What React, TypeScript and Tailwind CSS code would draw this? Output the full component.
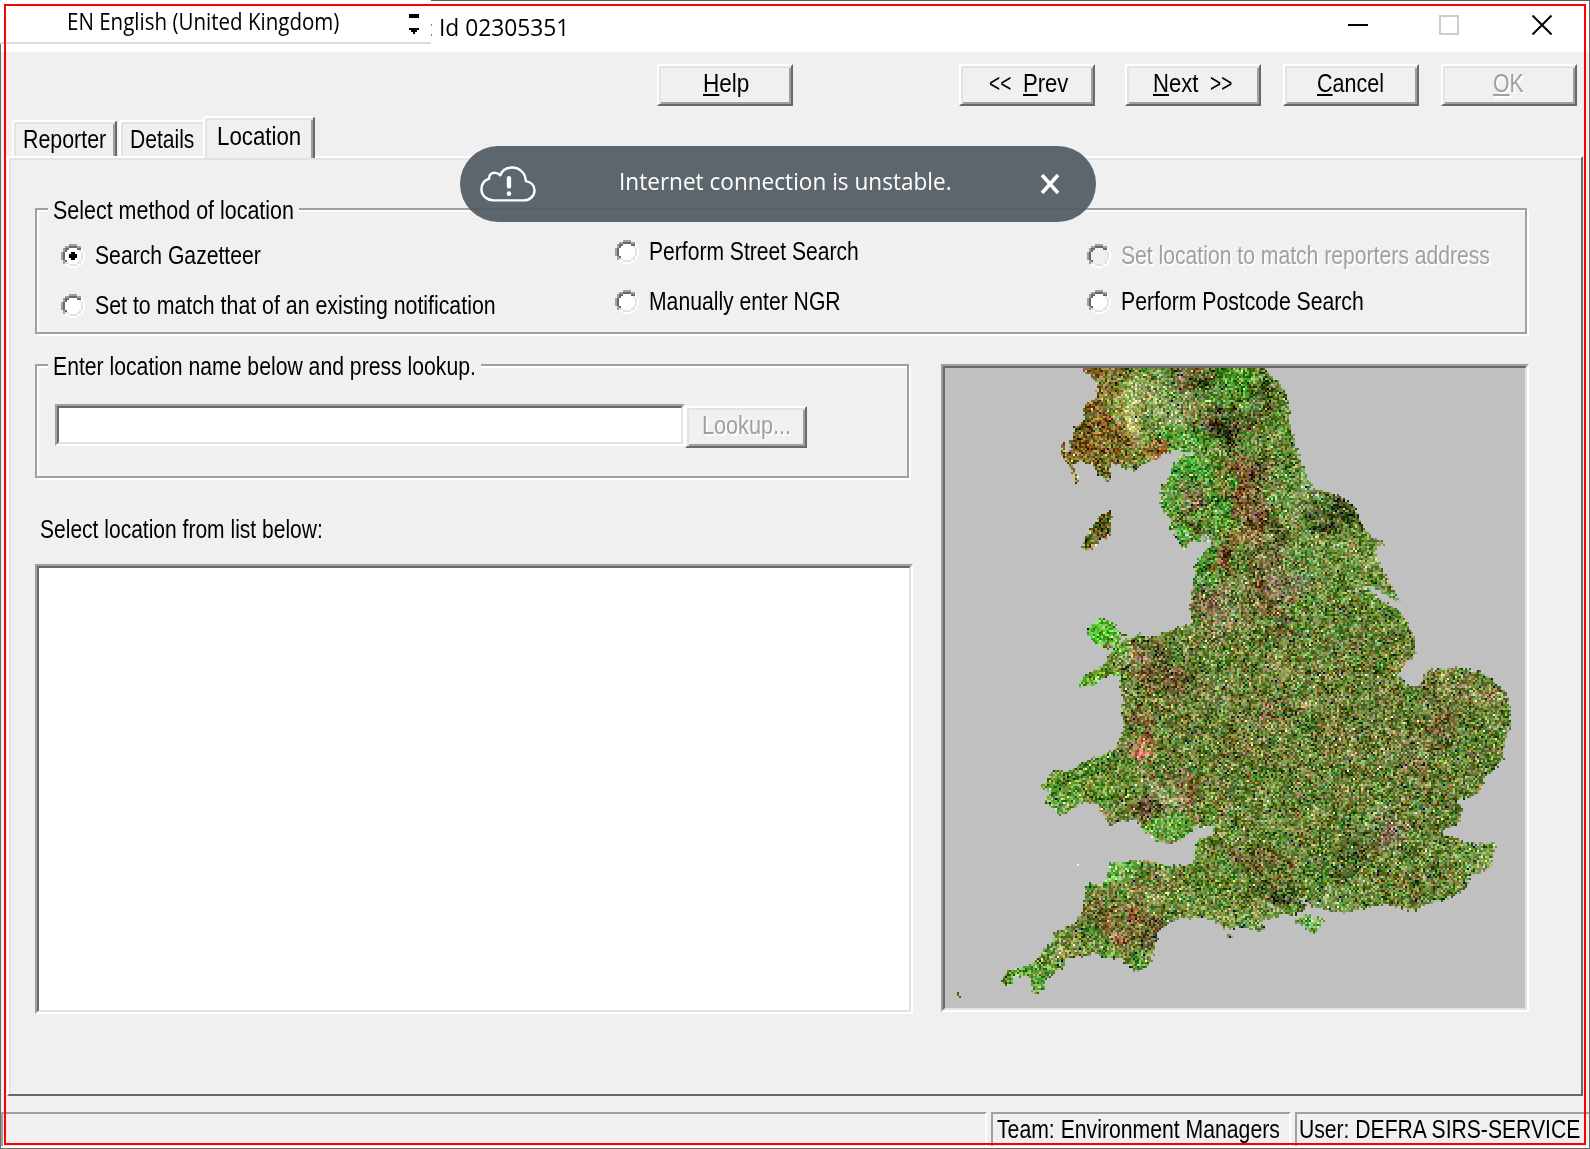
import React, { useLayoutEffect, useRef } from "react";

/* Single line of text condensed or expanded horizontally to a given width. */
function Fit({ w, className = "", children }: { w: number; className?: string; children: React.ReactNode }) {
  const ref = useRef<HTMLSpanElement>(null);
  useLayoutEffect(() => {
    const el = ref.current;
    if (el) el.style.transform = `scaleX(${(w - 2) / el.offsetWidth})`;
  }, [w]);
  return (
    <span className={`block h-[30px] shrink-0 pl-px text-[26px] leading-[30px] whitespace-pre ${className}`} style={{ width: w }}>
      <span ref={ref} className="inline-block origin-left">
        {children}
      </span>
    </span>
  );
}

const disabledText = "text-[#a0a0a0] [text-shadow:2px_2px_0_#ffffff]";

function Key({ children }: { children: React.ReactNode }) {
  return (
    <span className="underline decoration-2 underline-offset-[2px] [text-decoration-skip-ink:none]">{children}</span>
  );
}

function PushButton({ className = "", children }: { className?: string; children: React.ReactNode }) {
  return (
    <button
      className={`flex h-[42px] shrink-0 border-2 border-t-white border-l-white border-r-[#696969] border-b-[#696969] pt-0.5 shadow-[inset_2px_2px_0_#e3e3e3,inset_-2px_-2px_0_#a0a0a0] ${className}`}
    >
      {children}
    </button>
  );
}

function RadioMark({ checked, disabled }: { checked?: boolean; disabled?: boolean }) {
  return (
    <svg width="24" height="24" viewBox="0 0 12 12" shapeRendering="crispEdges" className="shrink-0">
      <path fill={disabled ? "#f0f0f0" : "#ffffff"} d="M4 2h4v1h1v1h1v4h-1v1h-1v1h-4v-1h-1v-1h-1v-4h1v-1h1z" />
      <path fill="#a0a0a0" d="M4 0h4v1h-4zM2 1h2v1h-2zM8 1h2v1h-2zM1 2h1v2h-1zM0 4h1v4h-1zM1 8h1v2h-1z" />
      <path fill="#696969" d="M4 1h4v1h-4zM2 2h2v1h-2zM8 2h2v1h-2zM2 3h1v1h-1zM1 4h1v4h-1zM2 8h1v1h-1z" />
      <path fill="#e3e3e3" d="M9 3h1v1h-1zM10 4h1v4h-1zM9 8h1v1h-1zM8 9h2v1h-2zM2 9h2v1h-2zM4 10h4v1h-4z" />
      <path fill="#ffffff" d="M10 2h1v2h-1zM11 4h1v4h-1zM10 8h1v2h-1zM8 10h2v1h-2zM2 10h2v1h-2zM4 11h4v1h-4z" />
      {checked && <path fill="#000" d="M5 4h2v1h1v2h-1v1h-2v-1h-1v-2h1z" />}
    </svg>
  );
}

function Radio(props: { label: string; w: number; checked?: boolean; disabled?: boolean; className?: string }) {
  return (
    <label className={`flex h-[30px] items-start ${props.className ?? ""}`}>
      <span className="mt-1 mr-[9px] block h-6">
        <RadioMark checked={props.checked} disabled={props.disabled} />
      </span>
      <Fit w={props.w} className={props.disabled ? disabledText : ""}>
        {props.label}
      </Fit>
    </label>
  );
}

function Group({ title, w, className = "", children }: { title: string; w: number; className?: string; children: React.ReactNode }) {
  return (
    <section
      className={`border-2 border-[#a0a0a0] shadow-[2px_2px_0_#ffffff,inset_2px_2px_0_#ffffff] ${className}`}
    >
      <div className="-mt-[15px] ml-[11px] flex w-fit bg-[#f0f0f0] pr-1 pl-1">
        <Fit w={w}>{title}</Fit>
      </div>
      {children}
    </section>
  );
}

type Pt = [number, number];

const mainland: Pt[] = [
  [398, 10], [412, 45], [432, 60], [438, 90], [436, 112], [412, 125], [400, 160], [400, 185], [378, 205], [368, 235],
  [366, 275], [356, 278], [355, 250], [345, 250], [340, 275], [350, 295], [365, 320], [378, 350], [380, 374], [388, 374],
  [384, 335], [376, 315], [390, 305], [410, 308], [430, 325], [440, 345], [470, 365], [474, 330], [470, 310], [490, 312],
  [515, 330], [540, 333], [570, 305], [600, 295], [610, 280], [650, 272], [690, 282], [650, 290], [635, 320], [625, 350],
  [608, 375], [606, 400], [597, 425], [610, 450], [625, 475], [632, 505], [645, 530], [655, 560], [662, 578], [672, 560],
  [685, 545], [715, 540], [730, 550], [712, 585], [695, 610], [690, 650], [685, 700], [680, 750], [685, 785], [655, 800],
  [610, 815], [580, 830], [560, 828], [545, 815], [530, 835], [510, 835], [490, 858], [470, 878], [460, 905], [430, 930],
  [405, 945], [385, 980], [410, 975], [430, 980], [440, 960], [470, 945], [495, 950], [500, 985], [510, 1020], [500, 1040],
  [508, 1080], [500, 1135], [485, 1165], [440, 1190], [400, 1203], [365, 1235], [325, 1232], [310, 1255], [283, 1280],
  [305, 1285], [315, 1300], [295, 1330], [320, 1345], [340, 1370], [365, 1355], [390, 1330], [440, 1332], [455, 1365],
  [470, 1397], [500, 1385], [540, 1375], [555, 1410], [590, 1440], [620, 1450], [650, 1447], [680, 1415], [700, 1400],
  [740, 1400], [740, 1425], [700, 1440], [690, 1470], [690, 1505], [660, 1515], [620, 1518], [590, 1505], [550, 1502],
  [500, 1505], [470, 1510], [465, 1560], [440, 1580], [415, 1567], [405, 1600], [400, 1650], [375, 1690], [350, 1710],
  [318, 1720], [315, 1750], [290, 1775], [270, 1815], [240, 1825], [210, 1830], [188, 1855], [190, 1875], [210, 1870],
  [225, 1845], [250, 1850], [265, 1865], [270, 1900], [280, 1903], [298, 1885], [300, 1855], [330, 1840], [350, 1815],
  [365, 1790], [400, 1793], [430, 1780], [460, 1793], [500, 1797], [525, 1825], [540, 1835], [565, 1825], [585, 1790],
  [588, 1755], [600, 1715], [640, 1680], [705, 1670], [740, 1680], [770, 1705], [820, 1703], [860, 1715], [875, 1705],
  [860, 1685], [910, 1668], [950, 1665], [985, 1645], [962, 1605], [1000, 1640], [1030, 1650], [1080, 1660], [1130, 1645],
  [1190, 1632], [1230, 1645], [1270, 1655], [1290, 1635], [1340, 1620], [1400, 1590], [1410, 1550], [1470, 1520],
  [1478, 1450], [1420, 1453], [1380, 1440], [1335, 1415], [1365, 1400], [1390, 1380], [1390, 1330], [1370, 1325],
  [1400, 1315], [1430, 1305], [1448, 1280], [1440, 1260], [1480, 1225], [1500, 1190], [1502, 1140], [1518, 1090],
  [1515, 1040], [1508, 1000], [1475, 965], [1440, 935], [1380, 925], [1310, 925], [1295, 945], [1280, 975], [1250, 978],
  [1225, 945], [1245, 905], [1270, 880], [1265, 835], [1245, 775], [1215, 745], [1180, 720], [1155, 690], [1095, 690],
  [1150, 676], [1195, 712], [1230, 722], [1210, 685], [1180, 630], [1165, 585], [1170, 560], [1188, 552], [1150, 530],
  [1130, 495], [1110, 440], [1075, 410], [1000, 385], [985, 350], [968, 300], [955, 250], [945, 215], [938, 165],
  [932, 110], [915, 70], [885, 45], [870, 10],
];
const anglesey: Pt[] = [
  [450, 775], [425, 790], [405, 815], [420, 835], [440, 855], [465, 872], [490, 848], [512, 822], [490, 817], [480, 790],
];
const isleOfMan: Pt[] = [
  [472, 453], [440, 470], [425, 500], [405, 530], [403, 555], [390, 568], [422, 568], [445, 545], [470, 520], [475, 488],
];
const isleOfWight: Pt[] = [[945, 1687], [985, 1663], [1030, 1680], [1010, 1715], [995, 1720], [975, 1697]];
const scilly: Pt[] = [[66, 1896], [80, 1898], [80, 1910], [74, 1916], [70, 1905]];
const portland: Pt[] = [[781, 1722], [791, 1724], [788, 1738], [783, 1736]];

/* x, y, x radius, y radius, red, green, blue, strength */
const terrain: number[][] = [
  [900, 1050, 420, 420, 112, 118, 60, 0.7],
  [1250, 1150, 260, 260, 112, 116, 60, 0.6],
  [420, 170, 85, 190, 116, 88, 28, 3.2],
  [440, 60, 50, 60, 140, 100, 50, 1.0],
  [520, 160, 42, 80, 190, 208, 124, 2.0],
  [580, 90, 60, 70, 150, 190, 110, 1.0],
  [500, 220, 50, 30, 200, 190, 110, 0.9],
  [650, 130, 90, 90, 150, 160, 104, 0.9],
  [680, 55, 70, 30, 90, 50, 30, 1.4],
  [580, 280, 35, 25, 180, 90, 50, 1.0],
  [495, 260, 35, 30, 120, 60, 40, 0.8],
  [780, 200, 44, 50, 40, 24, 16, 1.9],
  [860, 110, 40, 60, 86, 70, 34, 0.9],
  [770, 60, 60, 50, 60, 170, 40, 0.8],
  [650, 240, 80, 30, 60, 150, 40, 1.0],
  [660, 340, 60, 60, 80, 166, 56, 1.4],
  [620, 430, 30, 60, 80, 176, 60, 1.1],
  [740, 430, 60, 110, 70, 150, 44, 0.8],
  [670, 420, 55, 50, 140, 114, 90, 1.8],
  [695, 490, 25, 25, 60, 60, 30, 1.0],
  [780, 320, 35, 50, 150, 66, 40, 1.3],
  [820, 400, 35, 60, 140, 70, 56, 1.2],
  [860, 460, 40, 40, 110, 44, 30, 1.2],
  [830, 530, 70, 50, 150, 110, 76, 1.1],
  [900, 550, 18, 60, 50, 36, 16, 1.3],
  [870, 350, 40, 60, 90, 56, 40, 0.8],
  [770, 595, 35, 30, 130, 50, 36, 1.4],
  [720, 620, 40, 60, 60, 160, 46, 1.0],
  [660, 545, 30, 40, 80, 200, 70, 1.1],
  [712, 548, 18, 24, 200, 180, 214, 1.6],
  [960, 450, 60, 130, 140, 160, 96, 0.9],
  [1050, 460, 76, 34, 44, 50, 18, 1.8],
  [1000, 392, 30, 14, 210, 160, 180, 1.2],
  [1060, 580, 120, 80, 126, 150, 84, 0.9],
  [740, 740, 80, 70, 156, 130, 116, 1.1],
  [930, 660, 70, 50, 156, 120, 120, 0.8],
  [900, 780, 34, 40, 56, 40, 18, 1.3],
  [870, 700, 24, 70, 96, 56, 30, 1.1],
  [450, 820, 50, 50, 88, 208, 52, 2.6],
  [430, 960, 60, 30, 90, 200, 50, 1.8],
  [530, 890, 30, 35, 200, 180, 140, 1.1],
  [600, 890, 50, 40, 96, 66, 46, 1.2],
  [550, 950, 50, 50, 124, 84, 60, 0.9],
  [620, 960, 60, 50, 100, 50, 40, 0.9],
  [560, 1110, 26, 60, 150, 70, 60, 1.1],
  [572, 1155, 18, 30, 220, 110, 100, 1.6],
  [420, 1260, 110, 60, 92, 140, 48, 1.4],
  [330, 1310, 60, 60, 110, 176, 66, 1.1],
  [590, 1290, 55, 30, 186, 170, 130, 1.3],
  [620, 1350, 60, 40, 150, 124, 90, 0.9],
  [570, 1345, 26, 28, 60, 34, 24, 1.3],
  [660, 1290, 30, 60, 120, 66, 50, 0.9],
  [620, 1420, 70, 30, 96, 180, 66, 1.2],
  [480, 1380, 30, 22, 150, 150, 110, 1.1],
  [870, 1070, 40, 40, 164, 116, 124, 1.3],
  [740, 1020, 60, 50, 150, 166, 120, 0.6],
  [1330, 1090, 40, 60, 76, 54, 30, 1.1],
  [1400, 1000, 120, 50, 140, 140, 86, 0.9],
  [1200, 1410, 50, 50, 126, 96, 100, 1.1],
  [1220, 1200, 80, 60, 146, 134, 90, 0.7],
  [1100, 1460, 40, 34, 50, 66, 24, 1.3],
  [1090, 1545, 30, 30, 50, 60, 20, 1.3],
  [1270, 1580, 90, 60, 90, 96, 40, 1.0],
  [920, 1612, 42, 32, 40, 40, 12, 1.8],
  [880, 1500, 90, 50, 110, 84, 50, 0.8],
  [830, 1650, 120, 40, 136, 160, 86, 1.1],
  [1060, 1620, 90, 40, 134, 156, 94, 1.1],
  [1430, 1500, 60, 60, 134, 170, 94, 0.9],
  [500, 1540, 40, 40, 100, 190, 76, 1.1],
  [560, 1600, 90, 60, 130, 136, 76, 0.9],
  [440, 1650, 60, 60, 112, 92, 50, 1.0],
  [510, 1700, 34, 45, 150, 84, 64, 1.3],
  [575, 1700, 30, 40, 96, 56, 40, 1.0],
  [350, 1770, 80, 50, 130, 154, 84, 1.2],
  [240, 1850, 70, 50, 90, 170, 60, 1.6],
  [540, 1800, 50, 40, 120, 150, 66, 1.2],
  [435, 515, 50, 60, 100, 92, 30, 7.0],
  [990, 1690, 40, 30, 112, 176, 90, 2.4],
];

function drawMap(canvas: HTMLCanvasElement) {
  const ctx = canvas.getContext("2d");
  if (!ctx) return;
  const W = 290;
  const H = 320;
  let seed = 90210;
  const rnd = () => {
    seed = (seed * 1664525 + 1013904223) >>> 0;
    return seed / 4294967296;
  };
  const outline = new Path2D();
  for (const ring of [mainland, anglesey, isleOfMan, isleOfWight, scilly, portland]) {
    ring.forEach(([x, y], i) => (i ? outline.lineTo(x, y) : outline.moveTo(x, y)));
    outline.closePath();
  }
  /* Smooth lattice noise that roughens the terrain patches. */
  const lattice = Array.from({ length: 4096 }, () => rnd() * 2 - 1);
  const smooth = (x: number, y: number, size: number, offset: number) => {
    const gx = x / size;
    const gy = y / size;
    const ix = Math.floor(gx);
    const iy = Math.floor(gy);
    const fx = gx - ix;
    const fy = gy - iy;
    const at = (i: number, j: number) => lattice[(i * 71 + j * 157 + offset) & 4095];
    const top = at(ix, iy) * (1 - fx) + at(ix + 1, iy) * fx;
    const low = at(ix, iy + 1) * (1 - fx) + at(ix + 1, iy + 1) * fx;
    return top * (1 - fy) + low * fy;
  };
  const img = ctx.createImageData(W, H);
  const put = (cx: number, cy: number, r: number, g: number, b: number) => {
    const i = (cy * W + cx) * 4;
    img.data[i] = r;
    img.data[i + 1] = g;
    img.data[i + 2] = b;
    img.data[i + 3] = 255;
  };
  const level = (v: number) => Math.max(0, Math.min(5, Math.round(v / 51))) * 51;
  for (let cy = 0; cy < H; cy++) {
    for (let cx = 0; cx < W; cx++) {
      const x = (cx + 8) * 5.227;
      const y = (cy + 4.5) * 6;
      const inside = ctx.isPointInPath(outline, x + (rnd() - 0.5) * 9, y + (rnd() - 0.5) * 9);
      if (!inside) {
        put(cx, cy, 192, 192, 192);
        continue;
      }
      const wx = x + smooth(cx, cy, 9, 11) * 34 + smooth(cx, cy, 4, 900) * 26;
      const wy = y + smooth(cx, cy, 9, 2011) * 34 + smooth(cx, cy, 4, 3100) * 26;
      let weight = 1;
      let r = 96;
      let g = 136;
      let b = 54;
      for (const [tx, ty, rx, ry, tr, tg, tb, s] of terrain) {
        const d = ((wx - tx) / rx) ** 2 + ((wy - ty) / ry) ** 2;
        if (d > 5) continue;
        const k = s * 2.2 * Math.exp(-d * 1.4);
        weight += k;
        r += tr * k;
        g += tg * k;
        b += tb * k;
      }
      if (rnd() < 0.005) {
        put(cx, cy, 0, 0, 102);
        continue;
      }
      const patch = smooth(cx, cy, 5, 500) * 16 + smooth(cx, cy, 2.5, 1500) * 18;
      const lum = (rnd() + rnd() - 1) * 92 + patch;
      const hue = (rnd() + rnd() - 1) * 40 + smooth(cx, cy, 6, 2500) * 12;
      const extra = rnd() < 0.035 ? 70 : 0;
      put(
        cx,
        cy,
        level(r / weight + lum + hue + extra + 2),
        level(g / weight + lum * 0.9 - hue * 0.5 + extra),
        level(b / weight + lum * 0.9 + extra + (rnd() - 0.5) * 16),
      );
    }
  }
  put(66, 248, 255, 255, 153);
  ctx.putImageData(img, 0, 0);
}

function MapView() {
  const ref = useRef<HTMLCanvasElement>(null);
  useLayoutEffect(() => {
    if (ref.current) drawMap(ref.current);
  }, []);
  return (
    <div className="h-[648px] w-[588px] shrink-0 border-2 border-t-[#a0a0a0] border-l-[#a0a0a0] border-r-white border-b-white">
      <div className="border-2 border-t-[#696969] border-l-[#696969] border-r-[#e3e3e3] border-b-[#e3e3e3]">
        <canvas ref={ref} width={290} height={320} className="block h-[640px] w-[580px] bg-[#c0c0c0] [image-rendering:pixelated]" />
      </div>
    </div>
  );
}

const segoe = "font-['Open_Sans'] !text-[24px]";

export default function App() {
  return (
    <div className="relative flex h-[1149px] w-[1590px] flex-col overflow-hidden bg-[#f0f0f0] font-['Liberation_Sans',sans-serif] text-black">
      {/* Title bar */}
      <header className="flex h-[52px] shrink-0 bg-white">
        <div className="flex h-[44px] w-[431px] border-b-2 border-[#dcdcdc] pt-[6px] pl-[66px]">
          <Fit w={274} className={segoe}>
            EN English (United Kingdom)
          </Fit>
          <svg width="10" height="20" viewBox="0 0 10 20" className="mt-2 ml-[69px]" shapeRendering="crispEdges">
            <path d="M0 0h10v4h-10zM0 14h10v2h-2v2h-2v2h-2v-2h-2v-2h-2z" />
          </svg>
        </div>
        <div className="flex grow border-t border-[#5a5a5a]">
          <span className="mt-[23px] h-3 w-px border-y-2 border-[#4a90c0]" />
          <Fit w={132} className={`${segoe} mt-[11px] ml-[6px]`}>
            Id 02305351
          </Fit>
          <svg width="204" height="20" viewBox="0 0 204 20" className="mt-[14px] mr-[38px] ml-auto" fill="none">
            <path d="M0 10h20" stroke="#000" strokeWidth="2" />
            <path d="M92 1h18v18h-18z" stroke="#cccccc" strokeWidth="2" />
            <path d="M184.500 0.500L203.500 19.500M203.500 0.500L184.500 19.500" stroke="#000" strokeWidth="2" />
          </svg>
        </div>
      </header>

      {/* Wizard buttons */}
      <nav className="flex h-[64px] shrink-0 pt-3 pl-[657px]">
        <PushButton className="w-[136px] pl-[43px]">
          <Fit w={48}>
            <Key>H</Key>elp
          </Fit>
        </PushButton>
        <PushButton className="ml-[166px] w-[136px] pl-[27px]">
          <Fit w={24}>&lt;&lt;</Fit>
          <Fit w={47} className="ml-[10px]">
            <Key>P</Key>rev
          </Fit>
        </PushButton>
        <PushButton className="ml-[30px] w-[136px] pl-[25px]">
          <Fit w={47}>
            <Key>N</Key>ext
          </Fit>
          <Fit w={24} className="ml-[10px]">
            &gt;&gt;
          </Fit>
        </PushButton>
        <PushButton className="ml-[22px] w-[136px] pl-[31px]">
          <Fit w={69}>
            <Key>C</Key>ancel
          </Fit>
        </PushButton>
        <PushButton className="ml-[22px] w-[136px] pl-[49px]">
          <Fit w={33} className={disabledText}>
            <Key>O</Key>K
          </Fit>
        </PushButton>
      </nav>

      {/* Tabs */}
      <div className="relative z-10 -mb-0.5 flex h-[42px] shrink-0 items-end pl-3">
        <div className="mb-0.5 h-9 w-[105px] rounded-t-[3px] border-2 border-b-0 border-t-white border-l-white border-r-[#696969] pt-[2px] pl-[8px] shadow-[inset_2px_2px_0_#e3e3e3,inset_-2px_0_0_#a0a0a0]">
          <Fit w={85}>Reporter</Fit>
        </div>
        <div className="mb-0.5 ml-0.5 h-9 w-[84px] rounded-tl-[3px] border-t-2 border-l-2 border-white pt-[2px] pl-[8px] shadow-[inset_2px_2px_0_#e3e3e3]">
          <Fit w={66}>Details</Fit>
        </div>
        <div className="h-[42px] w-[112px] rounded-t-[3px] border-2 border-b-0 border-t-white border-l-white border-r-[#696969] bg-[#f0f0f0] pt-[3px] pl-[11px] shadow-[inset_2px_2px_0_#e3e3e3,inset_-2px_0_0_#a0a0a0]">
          <Fit w={86}>Location</Fit>
        </div>
      </div>

      {/* Tab page */}
      <main className="ml-[7px] h-[940px] w-[1576px] shrink-0 border-2 border-t-white border-l-white border-r-[#696969] border-b-[#696969] pt-[50px] pl-[26px] shadow-[inset_2px_2px_0_#e3e3e3]">
        <Group title="Select method of location" w={243} className="h-[126px] w-[1492px]">
          <div className="flex pt-[15px] pl-[24px]">
            <div className="w-[554px]">
              <Radio label="Search Gazetteer" w={168} checked />
              <Radio label="Set to match that of an existing notification" w={403} className="mt-5" />
            </div>
            <div className="-mt-1 w-[472px]">
              <Radio label="Perform Street Search" w={212} />
              <Radio label="Manually enter NGR" w={194} className="mt-5" />
            </div>
            <div>
              <Radio label="Set location to match reporters address" w={371} disabled />
              <Radio label="Perform Postcode Search" w={245} className="mt-4" />
            </div>
          </div>
        </Group>

        <div className="mt-[30px] flex">
          <div className="mr-8 w-[874px] shrink-0">
            <Group title="Enter location name below and press lookup." w={425} className="h-[114px] w-[874px]">
              <div className="mt-[23px] flex pl-[18px]">
                <div className="h-[42px] w-[630px] border-2 border-t-[#a0a0a0] border-l-[#a0a0a0] border-r-white border-b-white">
                  <input className="block h-[38px] w-[626px] border-2 border-t-[#696969] border-l-[#696969] border-r-[#e3e3e3] border-b-[#e3e3e3] bg-white outline-none" />
                </div>
                <PushButton className="mt-0.5 w-[122px] pl-[14px]">
                  <Fit w={91} className={disabledText}>
                    Lookup...
                  </Fit>
                </PushButton>
              </div>
            </Group>
            <Fit w={285} className="mt-9 ml-1">
              Select location from list below:
            </Fit>
            <div className="mt-5 h-[450px] w-[878px] border-2 border-t-[#a0a0a0] border-l-[#a0a0a0] border-r-white border-b-white">
              <div className="h-full border-2 border-t-[#696969] border-l-[#696969] border-r-[#e3e3e3] border-b-[#e3e3e3] bg-white" />
            </div>
          </div>
          <MapView />
        </div>
      </main>

      {/* Status bar */}
      <footer className="mt-4 flex h-9 shrink-0 border-b-2 border-white pl-px">
        <div className="w-[986px] border-t-2 border-r-2 border-l-2 border-t-[#a0a0a0] border-r-white border-l-[#a0a0a0]" />
        <div className="ml-1 w-[300px] border-t-2 border-r-2 border-l-2 border-t-[#a0a0a0] border-r-white border-l-[#a0a0a0] pl-[3px]">
          <Fit w={285}>Team: Environment Managers</Fit>
        </div>
        <div className="ml-1 grow border-t-2 border-l-2 border-[#a0a0a0] pl-px">
          <Fit w={283}>User: DEFRA SIRS-SERVICE</Fit>
        </div>
      </footer>

      {/* Window edge and highlight frame */}
      <div className="pointer-events-none absolute top-[44px] bottom-0 left-0 z-20 w-full border-b border-l border-[#696969]" />
      <div className="pointer-events-none absolute inset-y-0 right-0 z-20 w-px bg-[#696969]" />
      <div className="pointer-events-none absolute top-1 right-1 bottom-1 left-1 z-20 border-2 border-[#ff0000]" />

      {/* Connection notice */}
      <div className="absolute top-[146px] left-[460px] z-30 flex h-[76px] w-[636px] rounded-full bg-[#515a62]/92 text-white">
        <svg width="56" height="37" viewBox="0 0 58 38" fill="none" className="mt-[19px] ml-5">
          <path
            d="M14 36.500C7 36.500 1.500 31.500 1.500 25C1.500 19.500 5 15.500 9.500 14C9 10 12 7.500 16 8C18 8 19.500 9 21 10.500C23 5 27.500 2.500 33 2.500C41 2.500 47 8 47.500 16.500C52.500 17.500 56.500 21 56.500 26C56.500 32 51.500 36.500 45 36.500Z"
            stroke="#fff"
            strokeWidth="2.500"
            strokeLinejoin="round"
          />
          <path d="M30 13.500V22" stroke="#fff" strokeWidth="4.500" strokeLinecap="round" />
          <circle cx="30" cy="29.500" r="2.400" fill="#fff" />
        </svg>
        <Fit w={335} className={`${segoe} mt-5 ml-[82px]`}>
          Internet connection is unstable.
        </Fit>
        <svg width="20" height="20" viewBox="0 0 20 20" className="mt-7 ml-[87px]">
          <path d="M2 1L18 19M18 1L2 19" stroke="#fff" strokeWidth="3.600" />
        </svg>
      </div>
    </div>
  );
}
